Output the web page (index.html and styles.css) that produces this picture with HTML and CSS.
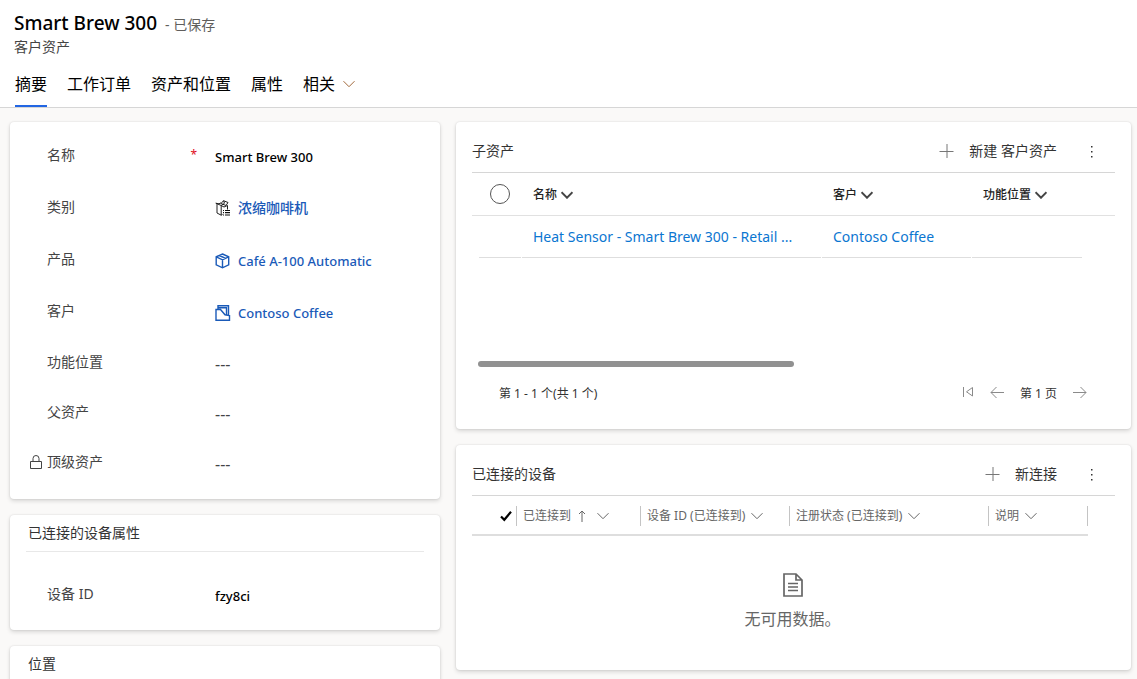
FILE: index.html
```html
<!DOCTYPE html>
<html lang="zh-CN">
<head>
<meta charset="utf-8">
<meta name="viewport" content="width=device-width, initial-scale=1">
<title>Smart Brew 300</title>
<link rel="stylesheet" href="styles.css">
</head>
<body>
<svg class="sprite" aria-hidden="true">
  <symbol id="chevron" viewBox="0 0 12 8"><path d="M0.5 1.2 6 6.7l5.500-5.500" fill="none" stroke="currentColor"/></symbol>
  <symbol id="plus" viewBox="0 0 14 14"><path d="M0 7.500h14M7.500 0v14" fill="none" stroke="currentColor"/></symbol>
  <symbol id="more" viewBox="0 0 4 14"><path d="M1 1h1.500v1.500H1zM1 6h1.500v1.500H1zM1 11h1.500v1.500H1z" fill="currentColor"/></symbol>
</svg>
<header class="header">
  <div class="title-line">
    <h1 class="title">Smart Brew 300</h1>
    <span class="saved">- 已保存</span>
  </div>
  <p class="entity">客户资产</p>
  <nav class="tabs">
    <button class="tab tab-active" type="button">摘要</button>
    <button class="tab" type="button">工作订单</button>
    <button class="tab" type="button">资产和位置</button>
    <button class="tab" type="button">属性</button>
    <button class="tab" type="button">相关 <svg class="chevron chevron-tab"><use href="#chevron"/></svg></button>
  </nav>
</header>
<main class="main">
  <div class="column">
    <section class="card fields">
      <div class="field"><label class="label" for="name">名称 <span class="required">*</span></label><input class="value" id="name" value="Smart Brew 300"></div>
      <div class="field"><span class="label">类别</span><a class="value lookup lookup-cjk" href="#">
        <svg class="lookup-icon" viewBox="0 0 16 16"><g fill="none" stroke="#222"><path d="M.8 3.200 6.200 5.500v9.700L2 13V4M.8 3.200 4 3.800l2-1M6.200 5.500 9 7l3.500-1.500M6 3.500 8.500.7l4.500 1.800-2 3zM8.500.7l1 2.500M9.500 3.200 6.200 5.500M12.500 5.500v4M6.200 15.200l1.300-.7"/></g><path d="M8 10.500h1M10 10.500h5M8 12.700h1M10 12.700h5M8 15h1M10 15h5" stroke="#111" stroke-width="1.200"/></svg>浓缩咖啡机</a></div>
      <div class="field"><span class="label">产品</span><a class="value lookup" href="#">
        <svg class="lookup-icon" viewBox="0 0 16 16"><path d="M7.500 1 13.700 3.800v8L7.500 14.800 1.200 11.800v-8zM1.200 3.800l6.300 3 6.200-3M7.500 6.800v8M4.300 2.500l6.300 2.900" fill="none" stroke="currentColor" stroke-width="1.400"/></svg>Café A-100 Automatic</a></div>
      <div class="field"><span class="label">客户</span><a class="value lookup" href="#">
        <svg class="lookup-icon" viewBox="0 0 16 16"><path d="M1 4.500V15.300H14.500V10.500L10 9.800 5.500 4.500zM3 4.500V.7H13.500V10.200M3.500 2.700h8V9.800" fill="none" stroke="currentColor" stroke-width="1.400"/></svg>Contoso Coffee</a></div>
      <div class="field field-short"><label class="label" for="loc">功能位置</label><input class="value value-empty" id="loc" value="---"></div>
      <div class="field field-short"><label class="label" for="parent">父资产</label><input class="value value-empty" id="parent" value="---"></div>
      <div class="field field-short"><label class="label" for="top"><svg class="lock" viewBox="0 0 12 15"><path d="M.5 6.500h11v7H.5zM3 6.500V3.500a3 3 0 0 1 6 0v3" fill="none" stroke="currentColor"/></svg>顶级资产</label><input class="value value-empty" id="top" value="---" readonly></div>
    </section>
    <section class="card section">
      <h2 class="section-title">已连接的设备属性</h2>
      <div class="section-body"><div class="field"><label class="label" for="device">设备 ID</label><input class="value" id="device" value="fzy8ci"></div></div>
    </section>
    <section class="card section">
      <h2 class="section-title">位置</h2>
    </section>
  </div>
  <div class="column">
    <section class="card grid-card">
      <div class="grid-head">
        <h2 class="grid-title">子资产</h2>
        <button class="command" type="button"><svg class="plus"><use href="#plus"/></svg>新建 客户资产</button>
        <button class="more" type="button" aria-label="更多"><svg class="dots"><use href="#more"/></svg></button>
      </div>
      <table class="assets">
        <colgroup><col class="c-check"><col><col class="c-customer"><col class="c-place"><col class="c-rest"></colgroup>
        <thead><tr>
          <th><input class="round" type="checkbox" aria-label="全选"></th>
          <th><button class="sort" type="button">名称<svg class="chevron chevron-bold"><use href="#chevron"/></svg></button></th>
          <th><button class="sort" type="button">客户<svg class="chevron chevron-bold"><use href="#chevron"/></svg></button></th>
          <th><button class="sort" type="button">功能位置<svg class="chevron chevron-bold"><use href="#chevron"/></svg></button></th>
          <th></th>
        </tr></thead>
        <tbody><tr>
          <td><div class="cell cell-check"></div></td>
          <td><div class="cell"><a class="link" href="#">Heat Sensor - Smart Brew 300 - Retail ...</a></div></td>
          <td><div class="cell"><a class="link" href="#">Contoso Coffee</a></div></td>
          <td><div class="cell"></div></td>
          <td></td>
        </tr></tbody>
      </table>
      <div class="track"><div class="thumb"></div></div>
      <div class="pager">
        <span class="count">第 1 - 1 个(共 1 个)</span>
        <button class="page-btn" type="button" aria-label="第一页"><svg class="first" viewBox="0 0 12 12"><path d="M1.500 1v10M10.500 1.500v8.500L4.500 5.800z" fill="none" stroke="currentColor"/></svg></button>
        <button class="page-btn" type="button" aria-label="上一页"><svg class="arrow" viewBox="0 0 14 12"><path d="M14 6.500H1M6.500 1 1 6.500 6.500 12" fill="none" stroke="currentColor"/></svg></button>
        <span class="page">第 1 页</span>
        <button class="page-btn" type="button" aria-label="下一页"><svg class="arrow" viewBox="0 0 14 12"><path d="M0 6.500h13M7.500 1 13 6.500 7.500 12" fill="none" stroke="currentColor"/></svg></button>
      </div>
    </section>
    <section class="card grid-card">
      <div class="grid-head">
        <h2 class="grid-title">已连接的设备</h2>
        <button class="command" type="button"><svg class="plus"><use href="#plus"/></svg>新连接</button>
        <button class="more" type="button" aria-label="更多"><svg class="dots"><use href="#more"/></svg></button>
      </div>
      <table class="devices">
        <colgroup><col class="d-check"><col class="d-to"><col class="d-id"><col><col class="d-note"></colgroup>
        <thead><tr>
          <th><button class="check" type="button" aria-label="全选"><svg class="tick" viewBox="0 0 12 12"><path d="M1 6.500 4.300 9.800 11 1.800" fill="none" stroke="#000" stroke-width="2.200"/></svg></button></th>
          <th><button class="head-btn" type="button">已连接到<svg class="up" viewBox="0 0 8 12"><path d="M4 12V1M1 4l3-3 3 3" fill="none" stroke="currentColor"/></svg><svg class="chevron"><use href="#chevron"/></svg></button></th>
          <th><button class="head-btn" type="button">设备 ID (已连接到)<svg class="chevron"><use href="#chevron"/></svg></button></th>
          <th><button class="head-btn" type="button">注册状态 (已连接到)<svg class="chevron"><use href="#chevron"/></svg></button></th>
          <th><button class="head-btn head-last" type="button">说明<svg class="chevron"><use href="#chevron"/></svg></button></th>
        </tr></thead>
      </table>
      <div class="empty">
        <svg class="doc" viewBox="0 0 20 24"><path d="M1 1h12l6 6v16H1zM13 1v6h6" fill="none" stroke="currentColor" stroke-width="1.700"/><path d="M5 10.500h10M5 14h10M5 17.500h10" stroke="currentColor" stroke-width="1.500"/></svg>
        <p class="empty-text">无可用数据。</p>
      </div>
    </section>
  </div>
</main>
</body>
</html>
```

FILE: styles.css
```css
* { box-sizing: border-box; }
body {
  margin: 0;
  height: 100vh;
  display: flex;
  flex-direction: column;
  overflow: hidden;
  background: #faf9f8;
  color: #333;
  font: 14px/20px "Noto Sans", "Noto Sans CJK SC", sans-serif;
}
h1, h2, p { margin: 0; font-weight: 400; }
button, input { font: inherit; color: inherit; background: none; border: 0; padding: 0; }
a { text-decoration: none; }
svg { flex: none; }
.sprite { position: absolute; width: 0; height: 0; }

.header { flex: none; background: #fff; border-bottom: 1px solid #d6d6d6; padding: 9px 14px 0; }
.title-line { display: flex; align-items: center; gap: 8px; height: 28px; }
.title { font-size: 19px; line-height: 28px; font-weight: 500; color: #000; }
.saved { color: #605e5c; padding-top: 4px; }
.entity { color: #444; }
.tabs { display: flex; gap: 20px; padding-left: 1px; margin-top: 4px; }
.tab { height: 46px; padding-top: 2px; font-size: 16px; color: #000; border-bottom: 2px solid transparent; display: flex; align-items: center; gap: 8px; }
.tab-active { border-color: #2266e3; }

.chevron { width: 12px; height: 8px; }
.chevron-tab { color: #a0683a; }
.chevron-bold { color: #444; stroke-width: 2px; }

.main { flex: 1; min-height: 0; overflow: hidden; display: grid; grid-template-columns: 430fr 675fr; gap: 16px; padding: 14px 6px 0 10px; }
.column { display: flex; flex-direction: column; gap: 16px; min-width: 0; }
.card { flex: none; background: #fff; border-radius: 4px; box-shadow: 0 2px 4px rgba(0, 0, 0, .14), 0 0 2px rgba(0, 0, 0, .12); }

.fields { padding: 7px 16px 12px; }
.field { display: grid; grid-template-columns: 171px 1fr; column-gap: 18px; align-items: center; height: 52px; }
.field-short { height: 50px; }
.label { display: flex; justify-content: space-between; align-items: center; color: #444; padding-left: 21px; }
.label:has(.lock) { padding-left: 4px; justify-content: flex-start; gap: 5px; }
.lock { width: 12px; height: 15px; }
.required { color: #e00b1c; font-size: 12px; }
.value { width: 100%; min-width: 0; padding-top: 4px; font-weight: 500; font-size: 13px; color: #000; }
.value-empty { color: #444; font-size: 16px; font-weight: 400; }
.lookup { display: flex; align-items: center; gap: 7px; color: #1a5ab8; }
.lookup-cjk { font-size: 14px; padding-top: 2px; }
.lookup-icon { width: 16px; height: 16px; }

.section { padding: 0 16px; }
.section-title { font-size: 14px; height: 37px; padding: 8px 2px; border-bottom: 1px solid #e8e8e8; }
.section-body { padding: 16px 0 10px; }

.grid-card { padding: 8px 16px 0; }
.grid-head { display: flex; align-items: center; height: 43px; border-bottom: 1px solid #d6d6d6; }
.grid-title { font-size: 14px; flex: 1; }
.command { display: flex; align-items: center; gap: 15px; }
.plus { width: 15px; height: 14px; color: #777; }
.more { width: 16px; margin: 2px 15px 0 27px; display: flex; justify-content: center; }
.dots { width: 4px; height: 14px; }

table { border-collapse: collapse; table-layout: fixed; width: 100%; }
th, td { padding: 0; text-align: left; font-weight: 400; }
.assets th { height: 42px; border-bottom: 1px solid #e1e1e1; vertical-align: middle; }
.c-check { width: 50px; }
.c-customer { width: 150px; }
.c-place { width: 111px; }
.c-rest { width: 32px; }
.round { appearance: none; display: block; width: 20px; height: 20px; margin: 0 0 0 18px; border: 1px solid #555; border-radius: 50%; }
.sort { display: flex; align-items: center; gap: 4px; padding: 2px 0 0 11px; font-size: 12px; font-weight: 500; white-space: nowrap; color: #222; }
.cell { height: 42px; margin-right: 1px; padding: 11px 0 0 11px; border-bottom: 1px solid #dedede; white-space: nowrap; overflow: hidden; }
.cell-check { margin-left: 7px; }
.link { color: #0b76d1; }
.track { margin: 103px 6px 0; }
.thumb { width: 50%; height: 6px; border-radius: 3px; background: #919191; }
.pager { display: flex; align-items: center; height: 62px; padding: 0 28px 8px 27px; font-size: 12px; }
.count { flex: 1; }
.page-btn { display: flex; padding-bottom: 3px; color: #8a8a8a; }
.page-btn svg { height: 12px; }
.first { width: 12px; margin-right: 16px; }
.arrow { width: 14px; }
.page { margin: 0 16px; }

.devices { width: calc(100% - 27px); }
.devices th { height: 39px; padding-top: 3px; border-bottom: 2px solid #dedede; }
.d-check { width: 44px; }
.d-to { width: 124px; }
.d-id { width: 149px; }
.d-note { width: 100px; }
.check { display: flex; margin-left: 28px; }
.tick { width: 12px; height: 12px; }
.head-btn { display: flex; align-items: center; width: 100%; height: 20px; padding-left: 6px; gap: 6px; border-left: 1px solid #c4c4c4; font-size: 12px; color: #666; white-space: nowrap; }
.head-last { border-right: 1px solid #c4c4c4; }
.up { width: 8px; height: 12px; margin: 0 5px 0 1px; }
.empty { display: flex; flex-direction: column; align-items: center; gap: 10px; padding: 37px 2px 39px 0; color: #666; }
.doc { width: 20px; height: 24px; }
.empty-text { font-size: 16px; line-height: 24px; }
```
